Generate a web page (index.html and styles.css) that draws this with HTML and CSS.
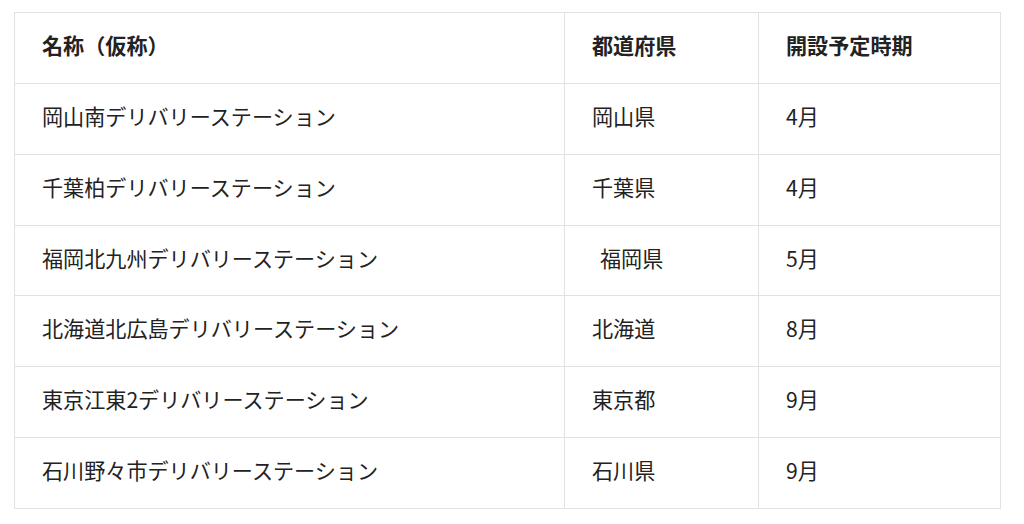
FILE: index.html
```html
<!DOCTYPE html>
<html lang="ja">
<head>
<meta charset="utf-8">
<link rel="stylesheet" href="styles.css">
</head>
<body>
<table class="schedule">
  <colgroup>
    <col class="c-name">
    <col class="c-pref">
    <col class="c-date">
  </colgroup>
  <thead>
    <tr><th>名称（仮称）</th><th>都道府県</th><th>開設予定時期</th></tr>
  </thead>
  <tbody>
    <tr><td>岡山南デリバリーステーション</td><td>岡山県</td><td>4月</td></tr>
    <tr><td>千葉柏デリバリーステーション</td><td>千葉県</td><td>4月</td></tr>
    <tr><td>福岡北九州デリバリーステーション</td><td><span class="lead">&nbsp;</span>福岡県</td><td>5月</td></tr>
    <tr><td>北海道北広島デリバリーステーション</td><td>北海道</td><td>8月</td></tr>
    <tr><td>東京江東2デリバリーステーション</td><td>東京都</td><td>9月</td></tr>
    <tr><td>石川野々市デリバリーステーション</td><td>石川県</td><td>9月</td></tr>
  </tbody>
</table>
</body>
</html>
```
FILE: styles.css
```css
html, body {
  margin: 0;
  padding: 0;
  background: #fff;
}
body {
  padding: 12px 0 0 14px;
  font-family: "Noto Sans CJK JP", "Noto Sans", sans-serif;
  color: #222;
}
.schedule {
  border-collapse: collapse;
  width: 986px;
  table-layout: fixed;
}
.c-name { width: 550px; }
.c-pref { width: 194px; }
.c-date { width: 242px; }
.schedule th,
.schedule td {
  border: 1px solid #e2e2e2;
  height: 63.86px;
  padding: 0 0 6px 27px;
  text-align: left;
  vertical-align: middle;
  font-size: 21.1px;
  line-height: 30px;
  white-space: nowrap;
}
.schedule th {
  font-weight: 700;
}
.schedule td {
  font-weight: 400;
}
.lead {
  display: inline-block;
  width: 8px;
}
```
